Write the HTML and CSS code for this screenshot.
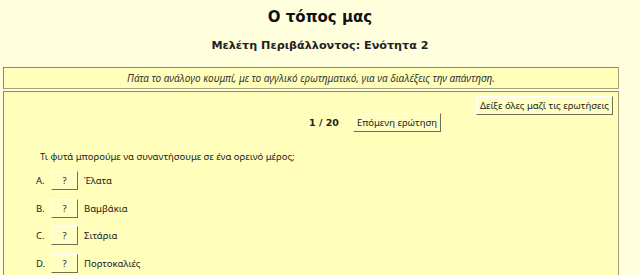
FILE: index.html
```html
<!DOCTYPE html>
<html lang="el">
<head>
<meta charset="utf-8">
<link rel="stylesheet" href="styles.css">
</head>
<body>
<div class="page">
  <h1 class="title">Ο τόπος μας</h1>
  <h2 class="subtitle">Μελέτη Περιβάλλοντος: Ενότητα 2</h2>
  <div class="box instructions">Πάτα το ανάλογο κουμπί, με το αγγλικό ερωτηματικό, για να διαλέξεις την απάντηση.</div>
  <div class="box quiz">
    <div class="toprow"><button class="btn">Δείξε όλες μαζί τις ερωτήσεις</button></div>
    <div class="nav"><span class="count">1 / 20</span><button class="btn">Επόμενη ερώτηση</button></div>
    <p class="question">Τι φυτά μπορούμε να συναντήσουμε σε ένα ορεινό μέρος;</p>
    <div class="option"><span class="letter">A.</span><button class="btn q">?</button><span>Έλατα</span></div>
    <div class="option"><span class="letter">B.</span><button class="btn q">?</button><span>Βαμβάκια</span></div>
    <div class="option"><span class="letter">C.</span><button class="btn q">?</button><span>Σιτάρια</span></div>
    <div class="option"><span class="letter">D.</span><button class="btn q">?</button><span>Πορτοκαλιές</span></div>
  </div>
</div>
</body>
</html>
```
FILE: styles.css
```css
html, body {
  margin: 0;
  padding: 0;
  background: #ffffdd;
  overflow: hidden;
}
.page {
  font-family: "Noto Sans", "DejaVu Sans", sans-serif;
  color: #222;
  font-size: 9.5px;
  height: 275px;
  overflow: hidden;
}
.title {
  font-family: "DejaVu Sans", sans-serif;
  font-size: 15px;
  font-weight: bold;
  text-align: center;
  margin: 8px 0 0;
  line-height: 18px;
  color: #111;
}
.subtitle {
  font-family: "DejaVu Sans", sans-serif;
  font-size: 11.2px;
  font-weight: bold;
  text-align: center;
  margin: 12px 0 0;
  line-height: 15px;
  color: #222;
}
.box {
  margin-left: 3px;
  width: 614px;
  background: #ffffbb;
  border: 1px solid #a8a27a;
  border-top-color: #8e8a5e;
  border-left-color: #8e8a5e;
}
.instructions {
  margin-top: 14px;
  font-style: italic;
  text-align: center;
  height: 20px;
  line-height: 20px;
  font-size: 10px;
  color: #333;
}
.quiz {
  margin-top: 2px;
  height: 200px;
}
.toprow {
  display: flex;
  justify-content: flex-end;
  padding: 4px 5px 0 0;
}
.btn {
  font-family: inherit;
  font-size: 9.5px;
  color: #222;
  background: #ffffc4;
  border: 1px solid;
  border-color: #ffffff #6f6f5a #6f6f5a #ffffff;
  padding: 0 3px;
  height: 19px;
  line-height: 17px;
  margin: 0;
}
.nav {
  display: flex;
  align-items: center;
  gap: 14px;
  margin-top: -2px;
  padding-left: 305px;
}
.count {
  font-family: "DejaVu Sans", sans-serif;
  font-weight: bold;
  font-size: 9.5px;
}
.question {
  margin: 18px 0 0 36px;
  line-height: 14px;
}
.option {
  display: flex;
  align-items: center;
  margin: 7px 0 0 32px;
  height: 19px;
}
.option + .option {
  margin-top: 8.5px;
}
.letter {
  width: 15px;
}
.btn.q {
  width: 27px;
  padding: 0;
  margin-right: 6px;
}
```
